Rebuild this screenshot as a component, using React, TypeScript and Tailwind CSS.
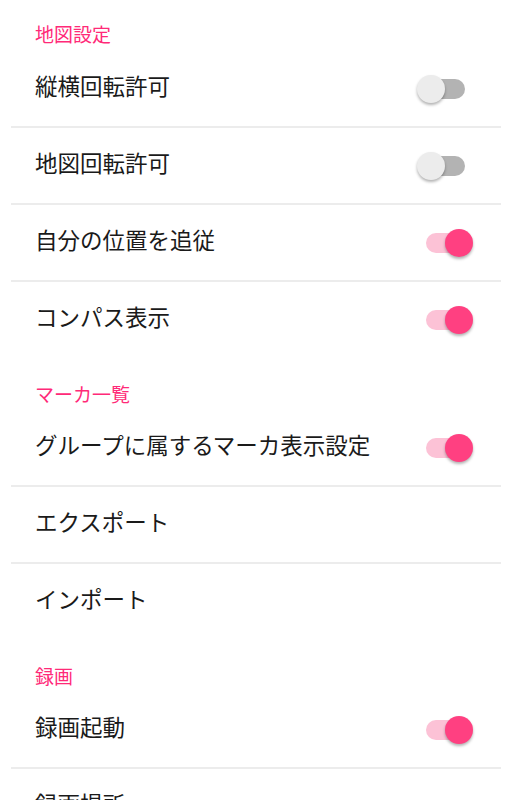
import { useState } from "react";

type Item = { label: string; toggle?: boolean; on?: boolean };
type Section = { title: string; items: Item[] };

const sections: Section[] = [
  {
    title: "地図設定",
    items: [
      { label: "縦横回転許可", toggle: true, on: false },
      { label: "地図回転許可", toggle: true, on: false },
      { label: "自分の位置を追従", toggle: true, on: true },
      { label: "コンパス表示", toggle: true, on: true },
    ],
  },
  {
    title: "マーカ一覧",
    items: [
      { label: "グループに属するマーカ表示設定", toggle: true, on: true },
      { label: "エクスポート" },
      { label: "インポート" },
    ],
  },
  {
    title: "録画",
    items: [{ label: "録画起動", toggle: true, on: true }, { label: "録画場所" }],
  },
];

const Switch = ({ initial }: { initial: boolean }) => {
  const [on, setOn] = useState(initial);
  return (
    <button
      onClick={() => setOn(!on)}
      className="relative h-[28px] w-[58px] shrink-0 cursor-pointer"
    >
      <span
        className={`absolute left-[9px] top-[4px] h-[20px] w-[39px] rounded-full ${
          on ? "bg-[#fcc2d6]" : "bg-[#b3b3b3]"
        }`}
      />
      <span
        className={`absolute top-0 h-[28px] w-[28px] rounded-full shadow-[0_2px_3px_rgba(0,0,0,0.3)] ${
          on ? "left-[28px] bg-[#ff4081]" : "left-0 bg-[#ececec]"
        }`}
      />
    </button>
  );
};

const App = () => {
  return (
    <div
      className="min-h-[800px] bg-white px-[11px]"
      style={{ fontFamily: '"Noto Sans CJK JP", "Noto Sans", sans-serif' }}
    >
      {sections.map((s, si) => (
        <div key={s.title}>
          <div
            className={`flex items-end pl-6 ${
              si === 0 ? "h-[51px] pb-[7px]" : "h-[53px] pb-[6px]"
            }`}
          >
            <span className="text-[19px] leading-5 text-[#ff2a78]">{s.title}</span>
          </div>
          {s.items.map((it, i) => (
            <div key={it.label}>
              <div className="flex h-[75px] items-center justify-between pl-6 pr-[26px]">
                <span className="pb-[8px] text-[22.5px] leading-7 text-[#1a1a1a]">
                  {it.label}
                </span>
                {it.toggle && <Switch initial={!!it.on} />}
              </div>
              {i < s.items.length - 1 && <div className="h-[2px] bg-[#ececec]" />}
            </div>
          ))}
        </div>
      ))}
    </div>
  );
};

export default App;
